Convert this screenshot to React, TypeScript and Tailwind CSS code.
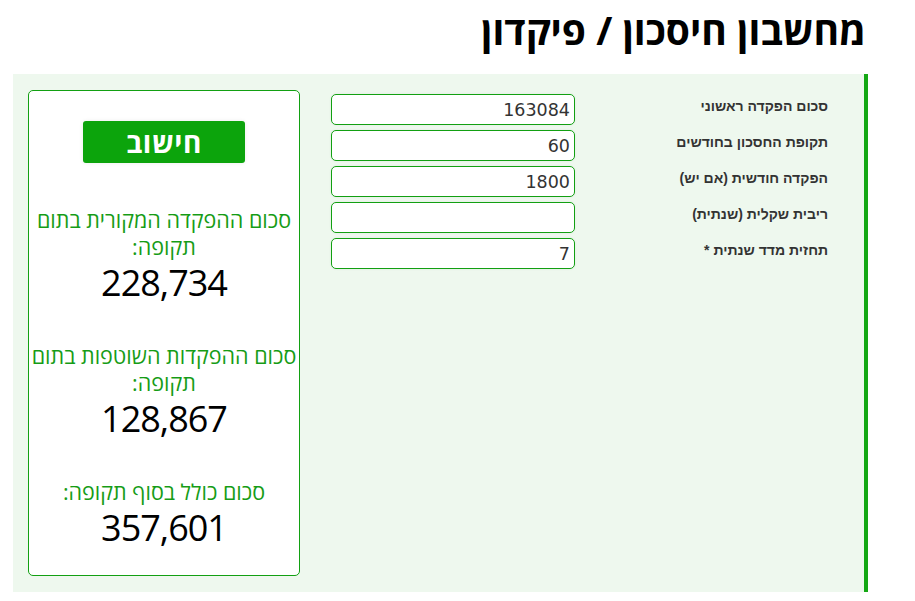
const fields = [
  { label: 'סכום הפקדה ראשוני', value: '163084' },
  { label: 'תקופת החסכון בחודשים', value: '60' },
  { label: 'הפקדה חודשית (אם יש)', value: '1800' },
  { label: 'ריבית שקלית (שנתית)', value: '' },
  { label: 'תחזית מדד שנתית *', value: '7' },
];

const results = [
  { label: 'סכום ההפקדה המקורית בתום תקופה:', value: '228,734' },
  { label: 'סכום ההפקדות השוטפות בתום תקופה:', value: '128,867' },
  { label: 'סכום כולל בסוף תקופה:', value: '357,601' },
];

export default function App() {
  return (
    <div dir="rtl" className="min-h-[601px] bg-white font-['Open_Sans',sans-serif]">
      <div className="mr-[47px] w-[855px]">
        {/* Page title */}
        <h1 className="pt-[4px] pr-[2px] h-[74px] text-[39px] font-bold leading-[52px] text-black">
          מחשבון חיסכון / פיקדון
        </h1>

        {/* Calculator panel */}
        <div className="flex bg-[#eef8ee] border-r-4 border-[#14a814] pr-[36px] pl-[15px] py-[16px]">
          {/* Form */}
          <div className="flex flex-col gap-[5px] pt-[4px]">
            {fields.map((f) => (
              <div key={f.label} className="flex items-start">
                <label className="w-[230px] pt-[2px] text-[14px] font-bold leading-[20px] text-[#333] font-['Liberation_Sans',sans-serif]">
                  {f.label}
                </label>
                <input
                  dir="ltr"
                  defaultValue={f.value}
                  className="ml-[31px] mr-[23px] h-[31px] w-[244px] rounded-[5px] border border-[#12a012] bg-white px-[4px] text-right text-[17.5px] text-[#333] font-['DejaVu_Sans',sans-serif] outline-none shadow-[0_0_3px_rgba(0,0,0,0.06)]"
                />
              </div>
            ))}
          </div>

          {/* Results */}
          <div className="flex w-[272px] h-[486px] flex-col items-center rounded-[5px] border border-[#12a012] bg-white pt-[30px] text-center">
            <button className="h-[42px] w-[162px] rounded-[3px] bg-[#0ca40c] text-[28px] font-bold leading-[42px] tracking-[0.5px] text-white shadow-[0_0_4px_rgba(0,0,0,0.08)]">
              חישוב
            </button>
            <div className="mt-[43px] flex flex-col gap-[36px]">
              {results.map((r) => (
                <div key={r.value}>
                  <div className="text-[21.5px] leading-[27px] text-[#169c16]">{r.label}</div>
                  <div dir="ltr" className="text-[36px] tracking-[-1px] leading-[46px] text-black">{r.value}</div>
                </div>
              ))}
            </div>
          </div>
        </div>
      </div>
    </div>
  );
}
